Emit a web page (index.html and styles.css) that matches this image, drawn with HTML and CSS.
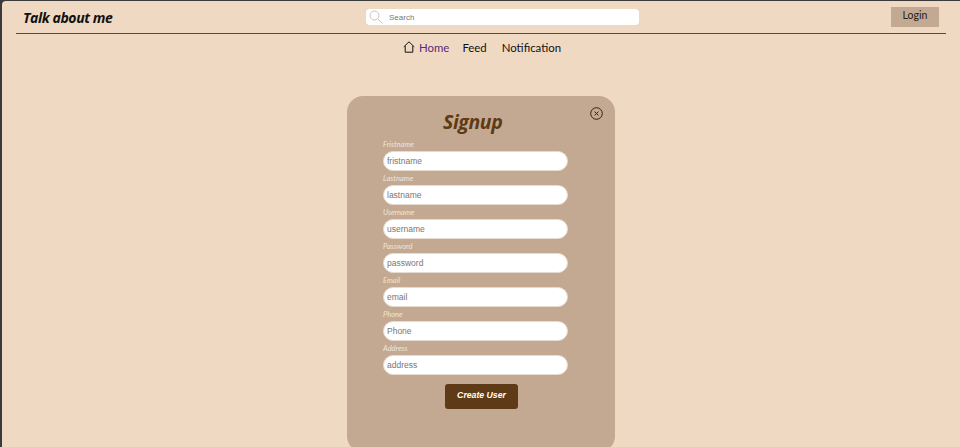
FILE: index.html
```html
<!DOCTYPE html>
<html lang="en">
<head>
    <meta charset="UTF-8">
    <meta name="viewport" content="width=device-width, initial-scale=1.0">
    <title>Talk about me</title>
    <link rel="stylesheet" href="styles.css">
</head>
<body>

<div class="page">
    <header class="topbar">
        <h1 class="brand">Talk about me</h1>
        <div class="search">
            <svg class="search-icon" width="14" height="14" viewBox="0 0 14 14" fill="none" stroke="#c4c4c4" stroke-width="1">
                <circle cx="5.5" cy="5.5" r="4.5"/>
                <path d="M9 9l4.5 4.5"/>
            </svg>
            <input type="text" placeholder="Search">
        </div>
        <button class="login">Login</button>
    </header>

    <nav class="nav">
        <svg class="home-icon" width="12" height="12" viewBox="0 0 12 12" fill="none" stroke="#111" stroke-width="1">
            <path d="M.8 5.8 6 .8l5.2 5M2.2 5v6.2h7.6V5"/>
        </svg>
        <a class="nav-link active">Home</a>
        <a class="nav-link feed">Feed</a>
        <a class="nav-link notif">Notification</a>
    </nav>

    <main class="modal">
        <svg class="close" width="13" height="13" viewBox="0 0 13 13" fill="none" stroke="#2e241b" stroke-width="1">
            <circle cx="6.5" cy="6.5" r="5.8"/>
            <path d="M4.6 4.6l3.8 3.8M8.4 4.6l-3.8 3.8"/>
        </svg>
        <h2 class="modal-title">Signup</h2>
        <form class="form">
            <label>Fristname</label>
            <input type="text" placeholder="fristname">
            <label>Lastname</label>
            <input type="text" placeholder="lastname">
            <label>Username</label>
            <input type="text" placeholder="username">
            <label>Password</label>
            <input type="text" placeholder="password">
            <label>Email</label>
            <input type="text" placeholder="email">
            <label>Phone</label>
            <input type="text" placeholder="Phone">
            <label>Address</label>
            <input type="text" placeholder="address">
            <button type="button" class="submit">Create User</button>
        </form>
    </main>
</div>

</body>
</html>
```

FILE: styles.css
```css
html, body {
    margin: 0;
    height: 447px;
    overflow: hidden;
    background: #3b3b3b;
}
.page {
    box-sizing: border-box;
    height: 446px;
    margin: 1px 0 0 2px;
    background: #f0d9c3;
    border-top-left-radius: 4px;
    font-family: "Open Sans", sans-serif;
    overflow: hidden;
}
.topbar {
    position: relative;
    display: flex;
    align-items: center;
    box-sizing: border-box;
    height: 33px;
    margin: 0 14px;
    padding: 0 7px;
    border-bottom: 1px solid #5b4a3c;
}
.brand {
    margin: 0;
    width: 343px;
    font-size: 14px;
    letter-spacing: -.4px;
    font-style: italic;
    font-weight: 700;
    color: #111;
}
.search {
    display: flex;
    align-items: center;
    box-sizing: border-box;
    width: 273px;
    height: 16px;
    padding-left: 3px;
    background: #fff;
    border-radius: 4px;
}
.search input {
    flex: 1;
    min-width: 0;
    margin-left: 6px;
    padding: 0;
    border: 0;
    outline: 0;
    background: transparent;
    font-family: "Liberation Sans", sans-serif;
    font-size: 8px;
}
.search input::placeholder {
    color: #777;
}
.login {
    width: 48px;
    height: 20px;
    margin-left: auto;
    padding: 0 0 4px;
    border: 0;
    background: #c3a991;
    font-family: "Lato", sans-serif;
    font-size: 10.5px;
    color: #222;
}
.nav {
    display: flex;
    align-items: center;
    height: 26px;
    padding-left: 401px;
    font-family: "Lato", sans-serif;
    font-size: 11.4px;
    color: #111;
}
.home-icon {
    margin-right: 4px;
}
.active {
    color: #5b2a78;
}
.feed {
    margin-left: 13px;
}
.notif {
    margin-left: 15px;
}
.modal {
    position: relative;
    box-sizing: border-box;
    width: 268px;
    height: 356px;
    margin: 36px 0 0 345px;
    padding: 13px 36px 0;
    background: #c3a991;
    border-radius: 16px;
}
.close {
    position: absolute;
    top: 11px;
    right: 12px;
}
.modal-title {
    margin: 0 0 5px;
    padding-left: 60px;
    font-size: 19.5px;
    letter-spacing: -.4px;
    line-height: 26px;
    font-style: italic;
    font-weight: 700;
    color: #5f3a16;
}
.form {
    display: flex;
    flex-direction: column;
    align-items: flex-start;
}
.form label {
    height: 11px;
    font-family: "Lato", sans-serif;
    font-size: 7.5px;
    line-height: 10px;
    font-style: italic;
    color: #efe5da;
}
.form input {
    box-sizing: border-box;
    width: 185px;
    height: 20px;
    margin-bottom: 3px;
    padding: 0 3px;
    border: 1px solid #e6dcd1;
    border-radius: 10px;
    outline: 0;
    background: #fff;
    font-family: "Liberation Sans", sans-serif;
    font-size: 8.5px;
}
.form input::placeholder {
    color: #777;
}
.submit {
    width: 73px;
    height: 25px;
    margin: 6px 0 0 62px;
    padding: 0 0 4px;
    border: 0;
    border-radius: 3px;
    background: #5f3a16;
    font-family: "Liberation Sans", sans-serif;
    font-size: 8.7px;
    font-style: italic;
    font-weight: 700;
    color: #fff;
}
```
